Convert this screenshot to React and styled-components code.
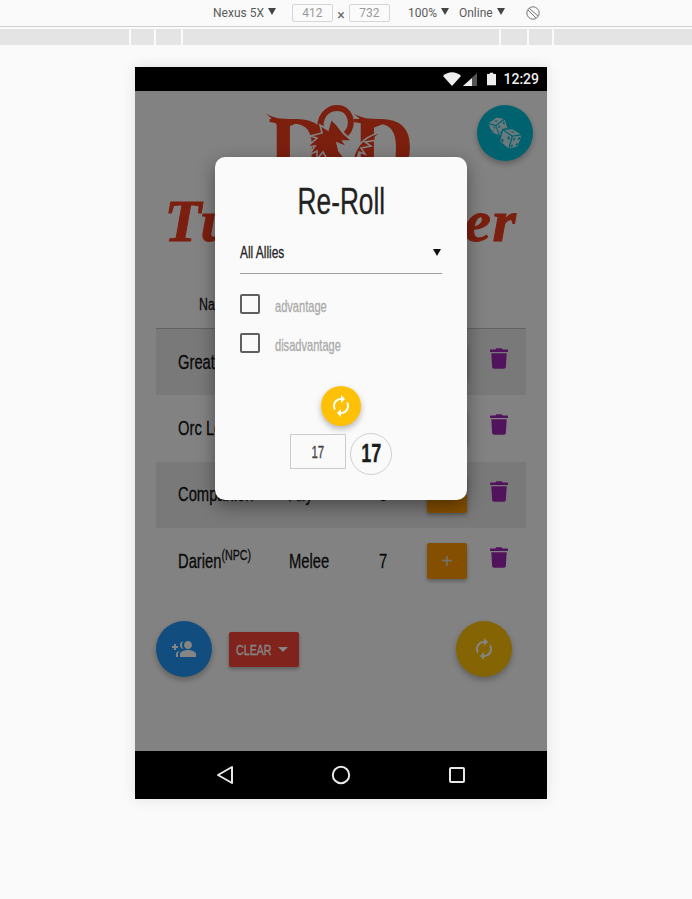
import React from 'react';
import styled, { createGlobalStyle, css } from 'styled-components';
import { FaTrash } from 'react-icons/fa';
import { MdGroupAdd, MdSync } from 'react-icons/md';
import { GiRollingDices } from 'react-icons/gi';

const NARROW = '"Liberation Sans", sans-serif';

const GlobalStyle = createGlobalStyle`
  html, body { margin: 0; padding: 0; background: #fafafa; }
  * { box-sizing: border-box; }
`;

// no condensed face is installed, so the wide one gets squeezed
const tall = css`
  display: inline-block;
  transform: scale(0.82, 1.16);
  transform-origin: ${(p) => (p.$center ? 'center' : 'left center')};
  white-space: nowrap;
  -webkit-text-stroke: 0.25px currentColor;
`;

const Page = styled.div`
  width: 692px;
  height: 899px;
  overflow: hidden;
  background: #fafafa;
`;

const DevBar = styled.div`
  height: 27px;
  display: flex;
  align-items: center;
  padding-left: 213px;
  border-bottom: 1px solid #cfcfcf;
  font-family: Roboto, sans-serif;
  font-size: 12px;
  color: #5a5a5a;
`;

const DevItem = styled.span`
  display: flex;
  align-items: center;
  gap: 4px;
  margin-left: ${(p) => p.$left || 0}px;
`;

const Caret = styled.i`
  width: 0;
  height: 0;
  margin-top: -3px;
  border-left: 4px solid transparent;
  border-right: 4px solid transparent;
  border-top: 7px solid #444;
`;

const SizeBox = styled.span`
  width: 41px;
  height: 18px;
  border: 1px solid #d6d6d6;
  border-radius: 2px;
  color: #9a9a9a;
  text-align: center;
  line-height: 16px;
`;

const Times = styled.span`
  width: 8px;
  text-align: center;
  font-size: 14px;
  color: #666;
  padding-top: 3px;
`;

const Ruler = styled.div`
  height: 16px;
  margin-top: 2px;
  display: grid;
  grid-template-columns: 129px 23px 25px 316px 26px 23px 1fr;
  column-gap: 2px;
`;

const RulerCell = styled.div`
  background: #e4e4e4;
`;

const Stage = styled.div`
  padding: 22px 0 0 135px;
`;

const Phone = styled.div`
  width: 412px;
  height: 732px;
  display: flex;
  flex-direction: column;
  background: #fafafa;
  box-shadow: 0 0 14px rgba(0, 0, 0, 0.1);
`;

const StatusBar = styled.div`
  height: 24px;
  flex: none;
  background: #000;
  display: flex;
  align-items: center;
  justify-content: flex-end;
  gap: 2px;
  padding-right: 8px;
  color: #eee;
  font-family: Roboto, sans-serif;
  font-size: 14px;
  font-weight: 500;
`;

const Battery = styled.svg`
  margin-left: 8px;
`;

const Clock = styled.span`
  margin-left: 5px;
`;

const Screen = styled.div`
  position: relative;
  flex: 1;
  padding: 0 21px;
  overflow: hidden;
`;

const Logo = styled.svg`
  display: block;
  width: 150px;
  height: 76px;
  margin: 14px 0 0 109px;
`;

const RoundButton = styled.div`
  width: ${(p) => p.$size || 56}px;
  height: ${(p) => p.$size || 56}px;
  flex: none;
  border-radius: 50%;
  background: ${(p) => p.$color};
  color: #fff;
  display: flex;
  align-items: center;
  justify-content: center;
  box-shadow: 0 3px 6px rgba(0, 0, 0, 0.28);
`;

const DiceButton = styled(RoundButton)`
  position: absolute;
  top: 14px;
  right: 14px;
`;

const SyncIcon = styled(MdSync)`
  transform: scaleX(-1);
`;

const GroupIcon = styled(MdGroupAdd)`
  transform: scaleX(-1);
`;

const Title = styled.h1`
  margin: 5px 0 0;
  height: 70px;
  text-align: center;
  white-space: nowrap;
  font-family: "Liberation Serif", serif;
  font-style: italic;
  font-weight: 700;
  font-size: 60px;
  line-height: 70px;
  letter-spacing: 1.6px;
  color: #eb3c1e;
  -webkit-text-stroke: 1px #eb3c1e;
`;

const TableHead = styled.div`
  height: 53px;
  margin-top: 20px;
  padding-left: 43px;
  padding-top: 19px;
  border-bottom: 1px solid #bdbdbd;
  font-family: ${NARROW};
  font-size: 15px;
  color: #111;
`;

const Row = styled.div`
  height: 66.3px;
  display: grid;
  grid-template-columns: 111px 90px 48px 63px 1fr;
  align-items: center;
  padding-left: 22px;
  background: ${(p) => (p.$striped ? '#e8e8e8' : 'transparent')};
  font-family: ${NARROW};
  font-size: 18px;
  color: #111;
`;

const Cell = styled.span`
  ${tall}
`;

const NpcTag = styled.sup`
  font-size: 13px;
  line-height: 0;
`;

const AddButton = styled.div`
  width: 40px;
  height: 36px;
  border-radius: 2px;
  background: #ff9800;
  color: #ddd;
  display: flex;
  align-items: center;
  justify-content: center;
  font-size: 20px;
  box-shadow: 0 2px 4px rgba(0, 0, 0, 0.3);
`;

const TrashIcon = styled(FaTrash)`
  width: 18px;
  height: 21px;
  color: #9c27b0;
  margin-top: -7px;
`;

const Footer = styled.div`
  display: flex;
  align-items: center;
  margin-top: 27px;
  padding-right: 14px;
`;

const ClearButton = styled.div`
  width: 70px;
  height: 35px;
  margin-left: 17px;
  margin-right: auto;
  border-radius: 2px;
  background: #f44336;
  color: #fff;
  display: grid;
  grid-template-columns: 42px 1fr;
  align-items: center;
  padding-left: 7px;
  font-family: ${NARROW};
  font-size: 13px;
  box-shadow: 0 2px 4px rgba(0, 0, 0, 0.3);
`;

const ClearCaret = styled.i`
  width: 0;
  height: 0;
  border-left: 5px solid transparent;
  border-right: 5px solid transparent;
  border-top: 5px solid #fff;
`;

const Dimmer = styled.div`
  position: absolute;
  inset: 0;
  background: rgba(0, 0, 0, 0.48);
`;

const Modal = styled.div`
  position: absolute;
  top: 66px;
  left: 80px;
  width: 252px;
  height: 343px;
  padding: 0 25px;
  border-radius: 10px;
  background: #fafafa;
  box-shadow: 0 6px 18px rgba(0, 0, 0, 0.4);
  font-family: ${NARROW};
  color: #222;
`;

const ModalTitle = styled.h2`
  margin: 0;
  padding-top: 26px;
  height: 79px;
  text-align: center;
  font-size: 32px;
  line-height: 36px;
  font-weight: 400;
`;

const Squeezed = styled.span`
  ${tall}
`;

const Select = styled.div`
  height: 38px;
  display: flex;
  align-items: flex-start;
  justify-content: space-between;
  padding-top: 8px;
  border-bottom: 1px solid #9e9e9e;
  font-size: 14.5px;
`;

const SelectCaret = styled.i`
  width: 0;
  height: 0;
  margin: 5px 1px 0 0;
  border-left: 4px solid transparent;
  border-right: 4px solid transparent;
  border-top: 7px solid #111;
`;

const CheckList = styled.div`
  display: flex;
  flex-direction: column;
  gap: 19px;
  padding-top: 20px;
`;

const CheckRow = styled.label`
  display: flex;
  align-items: center;
  gap: 15px;
  height: 20px;
  font-size: 13.5px;
  color: #aaa;
`;

const CheckText = styled(Squeezed)`
  margin-top: 5px;
`;

const CheckBox = styled.i`
  width: 20px;
  height: 20px;
  border: 2px solid #5f5f5f;
  border-radius: 2px;
`;

const RollArea = styled.div`
  display: flex;
  flex-direction: column;
  align-items: center;
  padding-top: 33px;
`;

const ResultRow = styled.div`
  display: flex;
  align-items: flex-start;
  gap: 4px;
  margin-top: 7px;
`;

const ResultInput = styled.div`
  width: 56px;
  height: 35px;
  margin-top: 1px;
  border: 1px solid #ccc;
  display: flex;
  align-items: center;
  justify-content: center;
  font-size: 14px;
  color: #444;
`;

const ResultCircle = styled.div`
  width: 42px;
  height: 42px;
  border: 1px solid #d0d0d0;
  border-radius: 50%;
  display: flex;
  align-items: center;
  justify-content: center;
  font-size: 22px;
  font-weight: 700;
  color: #1c1c1c;
`;

const NavBar = styled.div`
  height: 48px;
  flex: none;
  background: #000;
  display: grid;
  grid-template-columns: repeat(3, 116px);
  justify-content: center;
  justify-items: center;
  align-items: center;
`;

const rows = [
  { name: 'Great Wyrm', type: 'Melee', init: 12, striped: true },
  { name: 'Orc Leader', type: 'Melee', init: 10 },
  { name: 'Companion', type: 'Ally', init: 8, striped: true },
  { name: 'Darien', npc: true, type: 'Melee', init: 7 },
];

function DndLogo() {
  return (
    <Logo viewBox="0 0 150 76">
      <g fill="#eb3c1e" fontFamily='"Liberation Serif", serif' fontWeight="700" fontSize="86">
        <text x="3" y="71">D</text>
        <text x="87" y="71">D</text>
        <path d="M0 8 C8 13 14 14 30 14 L30 19 L15 25 C12 19 7 13 0 8Z" />
        <path d="M88 8 C96 13 102 14 118 14 L118 19 L103 25 C100 19 95 13 88 8Z" />
      </g>
      <path d="M60 32 C50 20 58 3 72 3 C86 3 90 20 81 29" fill="none" stroke="#eb3c1e" strokeWidth="6" />
      <g stroke="#fafafa" strokeWidth="1.6" fill="#eb3c1e">
        <path d="M66 14 L72 20 L78 28 L87 36 L78 36 L82 42 L72 38 L74 46 L80 54 L62 54 L58 47 L52 54 L52 46 L44 50 L50 41 L42 42 L52 33 L45 31 L57 28 L55 20 L63 25Z" />
        <path d="M88 54 C92 37 104 29 120 27 C110 31 108 33 112 35 L100 37 L106 41 L96 43 L100 49 L94 47 L92 54Z" />
      </g>
    </Logo>
  );
}

function App() {
  return (
    <Page>
      <GlobalStyle />
      <DevBar>
        <DevItem>Nexus 5X <Caret /></DevItem>
        <DevItem $left={16}>
          <SizeBox>412</SizeBox>
          <Times>×</Times>
          <SizeBox>732</SizeBox>
        </DevItem>
        <DevItem $left={18}>100% <Caret /></DevItem>
        <DevItem $left={10}>Online <Caret /></DevItem>
        <DevItem $left={21}>
          <svg width="14" height="14" viewBox="0 0 14 14" fill="none" stroke="#777" strokeWidth="1">
            <circle cx="7" cy="7" r="6.2" />
            <path d="M3 2 L12 10 M2 4 L10 12" />
          </svg>
        </DevItem>
      </DevBar>
      <Ruler>
        {[0, 1, 2, 3, 4, 5, 6].map((i) => <RulerCell key={i} />)}
      </Ruler>
      <Stage>
        <Phone>
          <StatusBar>
            <svg width="18" height="14" viewBox="0 0 18 14" fill="#eee">
              <path d="M0 4 C5 -1 13 -1 18 4 L9 14Z" />
            </svg>
            <svg width="14" height="14" viewBox="0 0 14 14">
              <path d="M14 1 V14 H0Z" fill="#555" />
              <path d="M9 6 V14 H0Z" fill="#eee" />
            </svg>
            <Battery width="9" height="14" viewBox="0 0 10 14" fill="#eee">
              <path d="M3 0 H7 V1.5 H10 V14 H0 V1.5 H3Z" />
            </Battery>
            <Clock>12:29</Clock>
          </StatusBar>
          <Screen>
            <DndLogo />
            <DiceButton $color="#00bcd4">
              <GiRollingDices size={36} color="#cfe9ee" />
            </DiceButton>
            <Title>Turn Tracker</Title>
            <TableHead><Cell>Name</Cell></TableHead>
            {rows.map((r) => (
              <Row key={r.name} $striped={r.striped}>
                <Cell>{r.name}{r.npc && <NpcTag>(NPC)</NpcTag>}</Cell>
                <Cell>{r.type}</Cell>
                <Cell>{r.init}</Cell>
                <AddButton>+</AddButton>
                <TrashIcon />
              </Row>
            ))}
            <Footer>
              <RoundButton $color="#2196f3"><GroupIcon size={24} /></RoundButton>
              <ClearButton><Cell>CLEAR</Cell><ClearCaret /></ClearButton>
              <RoundButton $color="#ffc107"><SyncIcon size={24} /></RoundButton>
            </Footer>
            <Dimmer />
            <Modal>
              <ModalTitle><Squeezed $center>Re-Roll</Squeezed></ModalTitle>
              <Select><Squeezed>All Allies</Squeezed><SelectCaret /></Select>
              <CheckList>
                <CheckRow><CheckBox /><CheckText>advantage</CheckText></CheckRow>
                <CheckRow><CheckBox /><CheckText>disadvantage</CheckText></CheckRow>
              </CheckList>
              <RollArea>
                <RoundButton $size={40} $color="#ffc107"><SyncIcon size={24} /></RoundButton>
                <ResultRow>
                  <ResultInput><Squeezed $center>17</Squeezed></ResultInput>
                  <ResultCircle><Squeezed $center>17</Squeezed></ResultCircle>
                </ResultRow>
              </RollArea>
            </Modal>
          </Screen>
          <NavBar>
            <svg width="20" height="20" viewBox="0 0 20 20" fill="none" stroke="#e8e8e8" strokeWidth="2" strokeLinejoin="round">
              <path d="M17 2 V18 L3 10Z" />
            </svg>
            <svg width="20" height="20" viewBox="0 0 20 20" fill="none" stroke="#e8e8e8" strokeWidth="2">
              <circle cx="10" cy="10" r="8.2" />
            </svg>
            <svg width="18" height="18" viewBox="0 0 18 18" fill="none" stroke="#e8e8e8" strokeWidth="2" strokeLinejoin="round">
              <rect x="2" y="2" width="14" height="14" rx="1" />
            </svg>
          </NavBar>
        </Phone>
      </Stage>
    </Page>
  );
}

export default App;
